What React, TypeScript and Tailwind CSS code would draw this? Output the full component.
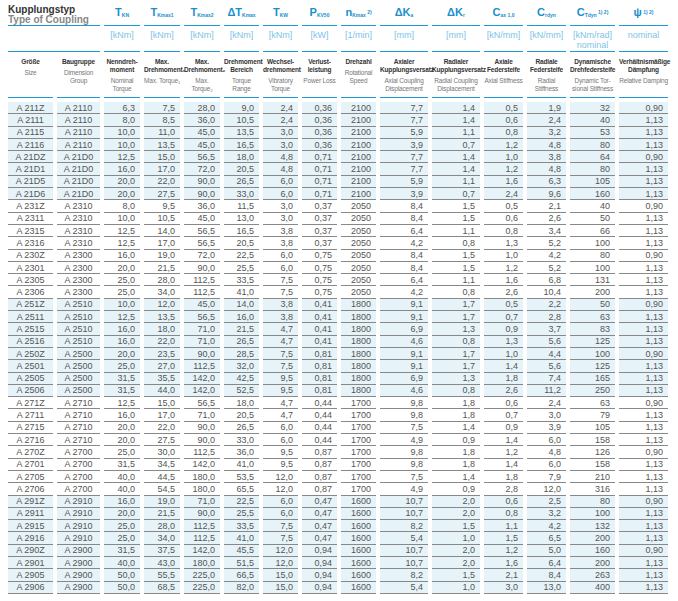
const ROWS = `A 211Z|A 2110|6,3|7,5|28,0|9,0|2,4|0,36|2100|7,7|1,4|0,5|1,9|32|0,90
A 2111|A 2110|8,0|8,5|36,0|10,5|2,4|0,36|2100|7,7|1,4|0,6|2,4|40|1,13
A 2115|A 2110|10,0|11,0|45,0|13,5|3,0|0,36|2100|5,9|1,1|0,8|3,2|53|1,13
A 2116|A 2110|10,0|13,5|45,0|16,5|3,0|0,36|2100|3,9|0,7|1,2|4,8|80|1,13
A 21DZ|A 21D0|12,5|15,0|56,5|18,0|4,8|0,71|2100|7,7|1,4|1,0|3,8|64|0,90
A 21D1|A 21D0|16,0|17,0|72,0|20,5|4,8|0,71|2100|7,7|1,4|1,2|4,8|80|1,13
A 21D5|A 21D0|20,0|22,0|90,0|26,5|6,0|0,71|2100|5,9|1,1|1,6|6,3|105|1,13
A 21D6|A 21D0|20,0|27,5|90,0|33,0|6,0|0,71|2100|3,9|0,7|2,4|9,6|160|1,13
A 231Z|A 2310|8,0|9,5|36,0|11,5|3,0|0,37|2050|8,4|1,5|0,5|2,1|40|0,90
A 2311|A 2310|10,0|10,5|45,0|13,0|3,0|0,37|2050|8,4|1,5|0,6|2,6|50|1,13
A 2315|A 2310|12,5|14,0|56,5|16,5|3,8|0,37|2050|6,4|1,1|0,8|3,4|66|1,13
A 2316|A 2310|12,5|17,0|56,5|20,5|3,8|0,37|2050|4,2|0,8|1,3|5,2|100|1,13
A 230Z|A 2300|16,0|19,0|72,0|22,5|6,0|0,75|2050|8,4|1,5|1,0|4,2|80|0,90
A 2301|A 2300|20,0|21,5|90,0|25,5|6,0|0,75|2050|8,4|1,5|1,2|5,2|100|1,13
A 2305|A 2300|25,0|28,0|112,5|33,5|7,5|0,75|2050|6,4|1,1|1,6|6,8|131|1,13
A 2306|A 2300|25,0|34,0|112,5|41,0|7,5|0,75|2050|4,2|0,8|2,6|10,4|200|1,13
A 251Z|A 2510|10,0|12,0|45,0|14,0|3,8|0,41|1800|9,1|1,7|0,5|2,2|50|0,90
A 2511|A 2510|12,5|13,5|56,5|16,0|3,8|0,41|1800|9,1|1,7|0,7|2,8|63|1,13
A 2515|A 2510|16,0|18,0|71,0|21,5|4,7|0,41|1800|6,9|1,3|0,9|3,7|83|1,13
A 2516|A 2510|16,0|22,0|71,0|26,5|4,7|0,41|1800|4,6|0,8|1,3|5,6|125|1,13
A 250Z|A 2500|20,0|23,5|90,0|28,5|7,5|0,81|1800|9,1|1,7|1,0|4,4|100|0,90
A 2501|A 2500|25,0|27,0|112,5|32,0|7,5|0,81|1800|9,1|1,7|1,4|5,6|125|1,13
A 2505|A 2500|31,5|35,5|142,0|42,5|9,5|0,81|1800|6,9|1,3|1,8|7,4|165|1,13
A 2506|A 2500|31,5|44,0|142,0|52,5|9,5|0,81|1800|4,6|0,8|2,6|11,2|250|1,13
A 271Z|A 2710|12,5|15,0|56,5|18,0|4,7|0,44|1700|9,8|1,8|0,6|2,4|63|0,90
A 2711|A 2710|16,0|17,0|71,0|20,5|4,7|0,44|1700|9,8|1,8|0,7|3,0|79|1,13
A 2715|A 2710|20,0|22,0|90,0|26,5|6,0|0,44|1700|7,5|1,4|0,9|3,9|105|1,13
A 2716|A 2710|20,0|27,5|90,0|33,0|6,0|0,44|1700|4,9|0,9|1,4|6,0|158|1,13
A 270Z|A 2700|25,0|30,0|112,5|36,0|9,5|0,87|1700|9,8|1,8|1,2|4,8|126|0,90
A 2701|A 2700|31,5|34,5|142,0|41,0|9,5|0,87|1700|9,8|1,8|1,4|6,0|158|1,13
A 2705|A 2700|40,0|44,5|180,0|53,5|12,0|0,87|1700|7,5|1,4|1,8|7,9|210|1,13
A 2706|A 2700|40,0|54,5|180,0|65,5|12,0|0,87|1700|4,9|0,9|2,8|12,0|316|1,13
A 291Z|A 2910|16,0|19,0|71,0|22,5|6,0|0,47|1600|10,7|2,0|0,6|2,5|80|0,90
A 2911|A 2910|20,0|21,5|90,0|25,5|6,0|0,47|1600|10,7|2,0|0,8|3,2|100|1,13
A 2915|A 2910|25,0|28,0|112,5|33,5|7,5|0,47|1600|8,2|1,5|1,1|4,2|132|1,13
A 2916|A 2910|25,0|34,0|112,5|41,0|7,5|0,47|1600|5,4|1,0|1,5|6,5|200|1,13
A 290Z|A 2900|31,5|37,5|142,0|45,5|12,0|0,94|1600|10,7|2,0|1,2|5,0|160|0,90
A 2901|A 2900|40,0|43,0|180,0|51,5|12,0|0,94|1600|10,7|2,0|1,6|6,4|200|1,13
A 2905|A 2900|50,0|55,5|225,0|66,5|15,0|0,94|1600|8,2|1,5|2,1|8,4|263|1,13
A 2906|A 2900|50,0|68,5|225,0|82,0|15,0|0,94|1600|5,4|1,0|3,0|13,0|400|1,13`
  .split("\n")
  .map((r) => r.split("|"));

const WIDTHS = [45, 43, 36, 36, 36, 35, 35, 35, 35, 48, 48, 39, 39, 45, 49];

const SYMBOLS: [string, string, string?][] = [
  ["T", "KN"],
  ["T", "Kmax1"],
  ["T", "Kmax2"],
  ["ΔT", "Kmax"],
  ["T", "KW"],
  ["P", "KV50"],
  ["n", "Kmax", "2)"],
  ["ΔK", "a"],
  ["ΔK", "r"],
  ["C", "ax 1,0"],
  ["C", "rdyn"],
  ["C", "Tdyn", "1) 2)"],
  ["ψ", "", "1) 2)"],
];

const UNITS = ["[kNm]", "[kNm]", "[kNm]", "[kNm]", "[kNm]", "[kW]", "[1/min]", "[mm]", "[mm]", "[kN/mm]", "[kN/mm]", "[kNm/rad] nominal", "nominal"];

const DESC: [string, string][] = [
  ["Größe", "Size"],
  ["Baugruppe", "Dimension Group"],
  ["Nenndreh-moment", "Nominal Torque"],
  ["Max. Drehmoment₁", "Max. Torque₁"],
  ["Max. Drehmoment₂", "Max. Torque₂"],
  ["Drehmoment Bereich", "Torque Range"],
  ["Wechsel-drehmoment", "Vibratory Torque"],
  ["Verlust-leistung", "Power Loss"],
  ["Drehzahl", "Rotational Speed"],
  ["Axialer Kupplungsversatz", "Axial Coupling Displacement"],
  ["Radialer Kupplungsversatz", "Radial Coupling Displacement"],
  ["Axiale Federsteife", "Axial Stiffness"],
  ["Radiale Federsteife", "Radial Stiffness"],
  ["Dynamische Drehfedersteife", "Dynamic Tor-sional Stiffness"],
  ["Verhältnismäßige Dämpfung", "Relative Damping"],
];

export default function App() {
  return (
    <div className="w-[678px] h-[601px] overflow-hidden bg-white pl-[4px] pt-[2px] text-[#555]" style={{ fontFamily: '"Liberation Sans Narrow", "Liberation Sans", Arial, sans-serif' }}>
      <table className="w-[668px] border-separate border-spacing-x-[4px] border-spacing-y-0 table-fixed">
        <colgroup>
          {WIDTHS.map((w, i) => (
            <col key={i} style={{ width: w }} />
          ))}
        </colgroup>
        <thead>
          <tr className="h-[23px]">
            <th colSpan={2} className="border-b border-[#1a9bd7] text-left align-top font-normal leading-[10px] pt-[3px]">
              <div className="text-[10px] font-bold text-[#333]">Kupplungstyp</div>
              <div className="text-[10px] font-bold text-[#888]">Type of Coupling</div>
            </th>
            {SYMBOLS.map(([b, s, sup], i) => (
              <th key={i} className="border-b border-[#1a9bd7] font-bold text-[11px] leading-[12px] text-[#1a8fcc] align-top pt-[4px] whitespace-nowrap">
                {b}
                <sub className="text-[5px]">{s}</sub>
                {sup && <sup className="text-[5px]"> {sup}</sup>}
              </th>
            ))}
          </tr>
          <tr className="h-[26px]">
            <th colSpan={2} className="border-b border-[#1a9bd7]"></th>
            {UNITS.map((u, i) => (
              <th key={i} className="border-b border-[#1a9bd7] font-normal text-[9px] leading-[10px] text-[#7ec3e6] align-top pt-[4px]">
                {u}
              </th>
            ))}
          </tr>
          <tr className="h-[46px]">
            {DESC.map(([de, en], i) => (
              <th key={i} className="border-b border-[#1a9bd7] font-normal align-top pt-[6px] text-center">
                <div className="text-[6.5px] leading-[8px] text-[#333] font-bold tracking-tight">{de}</div>
                <div className="text-[6.5px] leading-[8px] text-[#777] mt-[3px] tracking-tight">{en}</div>
              </th>
            ))}
          </tr>
          <tr className="h-[4px]">
            <th colSpan={15} className="p-0"></th>
          </tr>
        </thead>
        <tbody>
          {ROWS.map((r, ri) => {
            const band = Math.floor(ri / 8) % 2 === 0;
            return (
              <tr key={ri} className="h-[12.3px]">
                {r.map((v, ci) => (
                  <td
                    key={ci}
                    className={`border-b border-[#888] text-[9px] leading-[10px] p-0 ${band ? "bg-[#e6f4fa]" : "bg-white"} ${ci < 2 ? "text-center" : "text-right pr-[5px]"}`}
                  >
                    {v}
                  </td>
                ))}
              </tr>
            );
          })}
        </tbody>
      </table>
    </div>
  );
}
